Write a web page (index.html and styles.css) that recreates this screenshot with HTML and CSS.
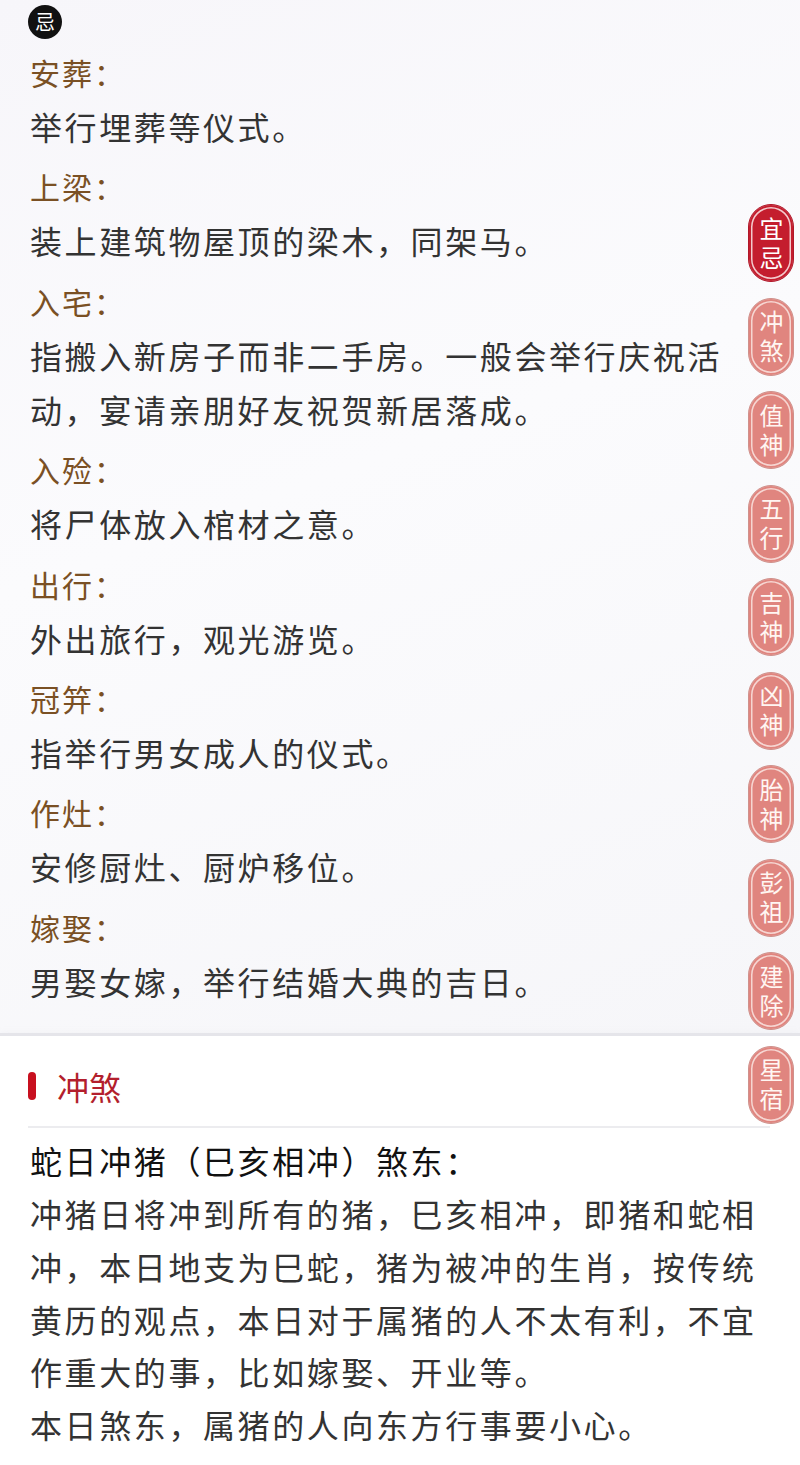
FILE: index.html
```html
<!DOCTYPE html>
<html lang="zh-CN">
<head>
<meta charset="utf-8">
<title>黄历</title>
<link rel="stylesheet" href="styles.css">
</head>
<body>
<div class="page">
  <section class="card card-top">
    <div class="badge">忌</div>
    <dl class="list">
      <div class="item"><dt>安葬：</dt><dd>举行埋葬等仪式。</dd></div>
      <div class="item"><dt>上梁：</dt><dd>装上建筑物屋顶的梁木，同架马。</dd></div>
      <div class="item"><dt>入宅：</dt><dd>指搬入新房子而非二手房。一般会举行庆祝活动，宴请亲朋好友祝贺新居落成。</dd></div>
      <div class="item"><dt>入殓：</dt><dd>将尸体放入棺材之意。</dd></div>
      <div class="item"><dt>出行：</dt><dd>外出旅行，观光游览。</dd></div>
      <div class="item"><dt>冠笄：</dt><dd>指举行男女成人的仪式。</dd></div>
      <div class="item"><dt>作灶：</dt><dd>安修厨灶、厨炉移位。</dd></div>
      <div class="item"><dt>嫁娶：</dt><dd>男娶女嫁，举行结婚大典的吉日。</dd></div>
    </dl>
  </section>
  <div class="sep"></div>
  <section class="card card-bottom">
    <h2 class="sec-title"><span class="bar"></span>冲煞</h2>
    <div class="divider"></div>
    <div class="body">
      <p class="lead">蛇日冲猪（巳亥相冲）煞东：</p>
      <p>冲猪日将冲到所有的猪，巳亥相冲，即猪和蛇相冲，本日地支为巳蛇，猪为被冲的生肖，按传统黄历的观点，本日对于属猪的人不太有利，不宜作重大的事，比如嫁娶、开业等。</p>
      <p>本日煞东，属猪的人向东方行事要小心。</p>
    </div>
  </section>
  <nav class="tabs">
    <div class="tab active"><span class="tab-text">宜忌</span></div>
    <div class="tab"><span class="tab-text">冲煞</span></div>
    <div class="tab"><span class="tab-text">值神</span></div>
    <div class="tab"><span class="tab-text">五行</span></div>
    <div class="tab"><span class="tab-text">吉神</span></div>
    <div class="tab"><span class="tab-text">凶神</span></div>
    <div class="tab"><span class="tab-text">胎神</span></div>
    <div class="tab"><span class="tab-text">彭祖</span></div>
    <div class="tab"><span class="tab-text">建除</span></div>
    <div class="tab"><span class="tab-text">星宿</span></div>
  </nav>
</div>
</body>
</html>
```

FILE: styles.css
```css
html, body {
  margin: 0;
  padding: 0;
}
body {
  font-family: "Noto Sans CJK SC", "Noto Sans", sans-serif;
  background: #ffffff;
  width: 800px;
  height: 1465px;
  overflow: hidden;
}
.page {
  position: relative;
  width: 800px;
  height: 1465px;
  background: #ffffff;
}
.card-top {
  padding: 5px 0 19px 28px;
  background: linear-gradient(160deg, #f7f6fa 0%, #fbfbfd 45%, #f6f6f9 100%);
}
.badge {
  width: 34px;
  height: 34px;
  border-radius: 50%;
  background: #111111;
  color: #ffffff;
  font-size: 20px;
  line-height: 34px;
  text-align: center;
  margin-bottom: 6px;
}
.list {
  margin: 0;
  padding-left: 2px;
  width: 712px;
}
.item {
  padding-bottom: 6.4px;
}
.item dt {
  font-size: 30px;
  line-height: 54px;
  letter-spacing: 2px;
  color: #7a5024;
}
.item dd {
  margin: 0;
  font-size: 32px;
  line-height: 54px;
  letter-spacing: 2.6px;
  color: #333333;
}
.sep {
  height: 3px;
  background: #e5e5ea;
  box-shadow: 0 3px 8px rgba(200, 200, 210, 0.4);
}
.card-bottom {
  padding: 23px 0 0 28px;
  background: #ffffff;
}
.sec-title {
  margin: 0;
  display: flex;
  align-items: center;
  gap: 21px;
  font-size: 32px;
  font-weight: 400;
  line-height: 54px;
  color: #b31f2d;
}
.bar {
  width: 8px;
  height: 28px;
  border-radius: 4px;
  background: #c8101f;
}
.divider {
  margin-top: 13px;
  width: 742px;
  height: 2px;
  background: #ececef;
}
.body {
  padding: 6px 0 0 2px;
  width: 745px;
}
.body p {
  margin: 0;
  font-size: 32px;
  line-height: 52.8px;
  letter-spacing: 2.6px;
  color: #333333;
}
.body .lead {
  color: #111111;
}
.tabs {
  position: absolute;
  top: 204px;
  left: 748px;
  display: flex;
  flex-direction: column;
  gap: 15.5px;
}
.tab {
  box-sizing: border-box;
  width: 46px;
  height: 78px;
  border-radius: 23px;
  background: #e0857f;
  border: 1.5px solid #cf918c;
  box-shadow: inset 0 0 0 2px #e0857f, inset 0 0 0 3.5px #f6d6d2;
  color: #fff6f2;
  display: flex;
  align-items: center;
  justify-content: center;
}
.tab-text {
  writing-mode: vertical-rl;
  font-size: 24px;
  line-height: 24px;
  letter-spacing: 5px;
  margin-bottom: -5px;
}
.tab.active {
  background: #c41d2e;
  border-color: #b0182a;
  box-shadow: inset 0 0 0 2px #c41d2e, inset 0 0 0 3.5px #f3c9cc;
  color: #ffffff;
}
```
